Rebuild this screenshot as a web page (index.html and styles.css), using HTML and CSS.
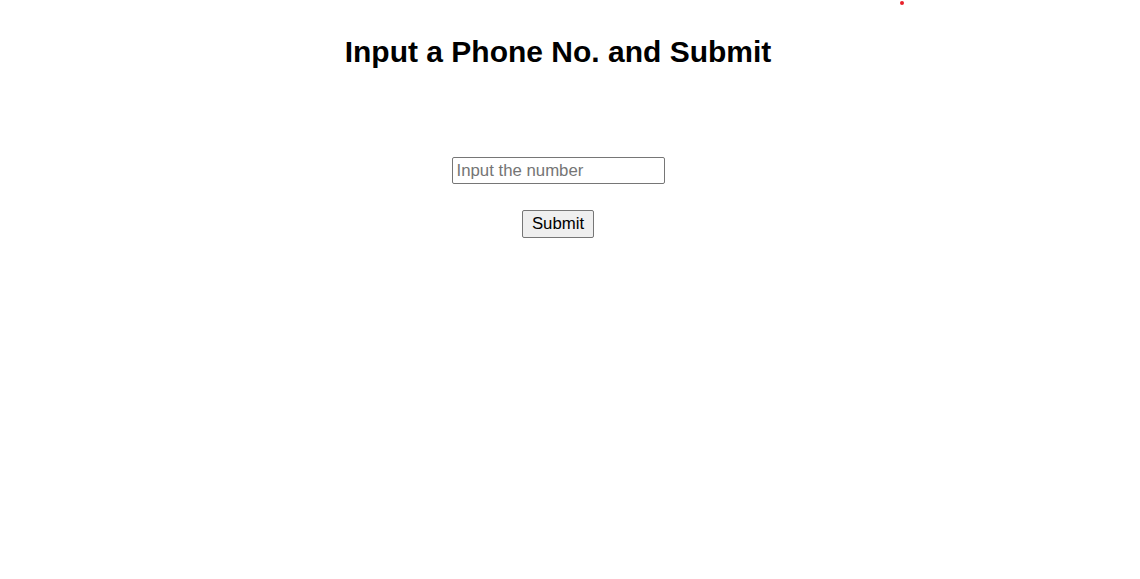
FILE: index.html
```html
<!DOCTYPE html>
<html>
<head>
<meta charset="utf-8">
<link rel="stylesheet" href="styles.css">
</head>
<body>
<span class="dot"></span>
<main class="page">
  <h1 class="title">Input a Phone No. and Submit</h1>
  <form class="form">
    <input class="phone" type="text" placeholder="Input the number">
    <button class="submit" type="button">Submit</button>
  </form>
</main>
</body>
</html>
```
FILE: styles.css
```css
html, body {
  margin: 0;
  padding: 0;
  background: #fff;
}
body {
  font-family: "Liberation Sans", Arial, sans-serif;
  color: #000;
  padding: 0 8px;
}
.dot {
  position: absolute;
  left: 900px;
  top: 1px;
  width: 4px;
  height: 4px;
  border-radius: 50%;
  background: #e8202a;
}
.page {
  width: 1100px;
  display: flex;
  flex-direction: column;
  align-items: center;
}
.title {
  font-size: 30px;
  font-weight: bold;
  line-height: 35px;
  margin: 34px 0 0;
}
.form {
  display: flex;
  flex-direction: column;
  align-items: center;
  margin-top: 88px;
  gap: 26px;
}
.phone {
  box-sizing: border-box;
  width: 213px;
  height: 27px;
  font-family: "Liberation Sans", Arial, sans-serif;
  font-size: 16.8px;
  padding: 1px 4px;
  border: 1px solid #767676;
  border-radius: 2px;
  color: #000;
}
.phone::placeholder {
  color: #757575;
}
.submit {
  box-sizing: border-box;
  width: 72px;
  height: 28px;
  font-family: "Liberation Sans", Arial, sans-serif;
  font-size: 16.8px;
  padding: 1px 6px;
  border: 1px solid #767676;
  border-radius: 2px;
  background: #efefef;
  color: #000;
}
```
